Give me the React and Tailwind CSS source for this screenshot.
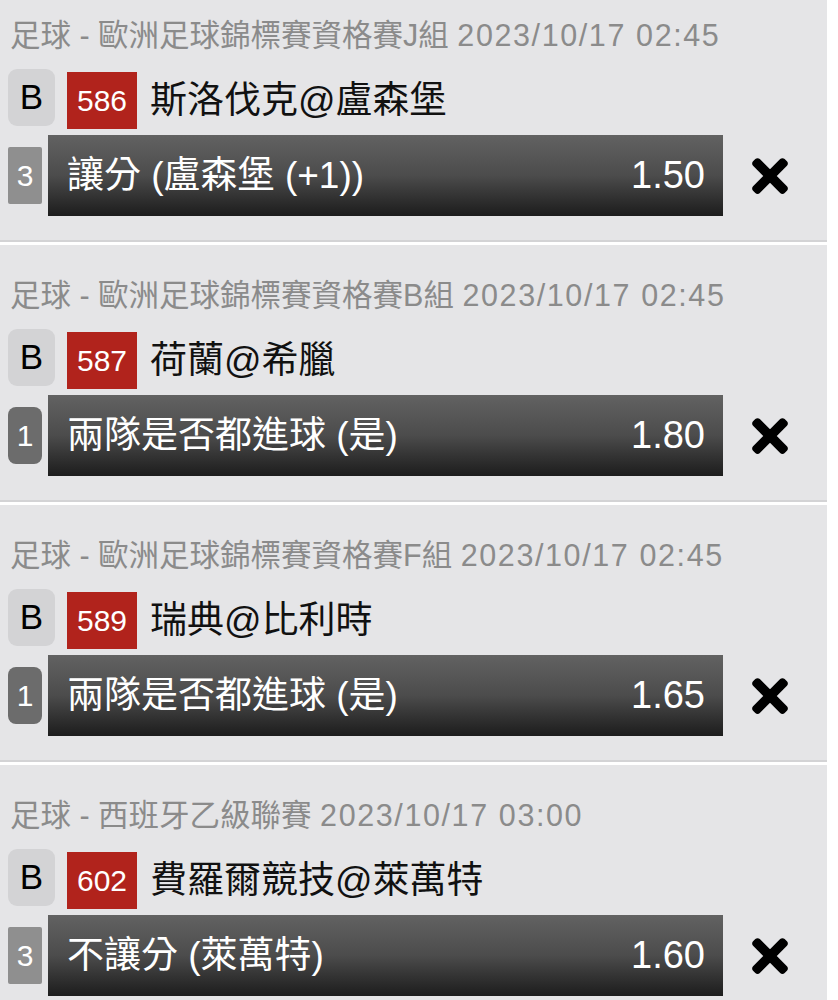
import { FaTimes } from "react-icons/fa";

const bets = [
    {
        league: "足球 - 歐洲足球錦標賽資格賽J組",
        time: "2023/10/17 02:45",
        code: "586",
        match: "斯洛伐克@盧森堡",
        leg: "3",
        pick: "讓分 (盧森堡 (+1))",
        odds: "1.50",
    },
    {
        league: "足球 - 歐洲足球錦標賽資格賽B組",
        time: "2023/10/17 02:45",
        code: "587",
        match: "荷蘭@希臘",
        leg: "1",
        pick: "兩隊是否都進球 (是)",
        odds: "1.80",
    },
    {
        league: "足球 - 歐洲足球錦標賽資格賽F組",
        time: "2023/10/17 02:45",
        code: "589",
        match: "瑞典@比利時",
        leg: "1",
        pick: "兩隊是否都進球 (是)",
        odds: "1.65",
    },
    {
        league: "足球 - 西班牙乙級聯賽",
        time: "2023/10/17 03:00",
        code: "602",
        match: "費羅爾競技@萊萬特",
        leg: "3",
        pick: "不讓分 (萊萬特)",
        odds: "1.60",
    },
];

const BetCard = ({ bet }) => {
    return (
        <div className="w-[827px] h-[257px] bg-[#e5e5e7] border-b-2 border-[#d3d3d5] mb-[3px]">
            <div className="pt-[32px] pl-[10px] text-[30.5px] leading-[36px] text-[#8b8b8b] whitespace-nowrap">
                {bet.league} <span className="tracking-[1.6px]">{bet.time}</span>
            </div>
            <div className="flex items-start mt-[16px] h-[60px]">
                <div className="ml-[8px] w-[47px] h-[57px] rounded-[9px] bg-[#d3d3d5] flex items-center justify-center text-[35px] text-black">
                    B
                </div>
                <div className="ml-[12px] mt-[3px] w-[70px] h-[57px] bg-[#b1231c] flex items-center justify-center text-[30px] text-white">
                    {bet.code}
                </div>
                <div className="ml-[13px] mt-[3px] h-[57px] flex items-center text-[37px] text-[#111] whitespace-nowrap">
                    {bet.match}
                </div>
            </div>
            <div className="flex items-center mt-[6px]">
                <div
                    className={
                        bet.leg === "1"
                            ? "ml-[8px] w-[34px] h-[57px] rounded-[8px] bg-[#6c6c6c] flex items-center justify-center text-[30px] text-white"
                            : "ml-[8px] w-[34px] h-[57px] rounded-[2px] bg-[#8f8f8f] flex items-center justify-center text-[30px] text-white"
                    }
                >
                    {bet.leg}
                </div>
                <div className="ml-[6px] w-[675px] h-[81px] bg-linear-to-b from-[#626262] via-[#4c4c4c] to-[#1d1d1d] flex items-center justify-between pl-[19px] pr-[18px] text-white">
                    <span className="text-[37px] whitespace-nowrap">{bet.pick}</span>
                    <span className="text-[38px]">{bet.odds}</span>
                </div>
                <div className="ml-[22px] w-[50px] flex items-center justify-center text-black">
                    <FaTimes size={52} />
                </div>
            </div>
        </div>
    );
};

const App = () => {
    return (
        <div
            className="min-h-screen bg-white overflow-hidden"
            style={{ fontFamily: '"Liberation Sans", "Noto Sans CJK TC", sans-serif' }}
        >
            <div className="-mt-[15px]">
                {bets.map((bet) => (
                    <BetCard key={bet.code} bet={bet} />
                ))}
            </div>
        </div>
    );
};

export default App;
